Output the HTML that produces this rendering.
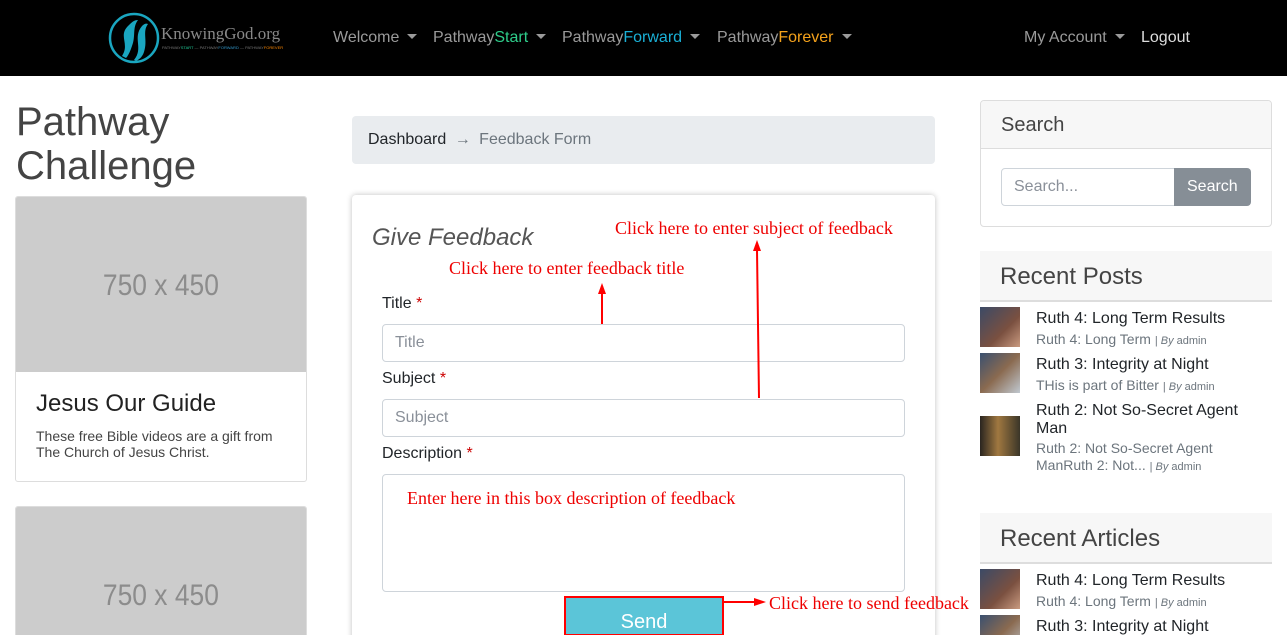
<!DOCTYPE html>
<html style="overflow:hidden;height:635px"><head><style>
*{box-sizing:border-box;margin:0;padding:0}
body{width:1287px;height:635px;overflow:hidden;background:#fff;font-family:"Liberation Sans",sans-serif;color:#212529;position:relative}
.a{position:absolute;white-space:nowrap}
.nav{position:absolute;left:0;top:0;width:1287px;height:76px;background:#000}
.ni{position:absolute;top:29px;font-size:16px;color:#9a9a9a}
.car::after{content:"";display:inline-block;margin-left:8px;vertical-align:3px;border-top:5px solid #9a9a9a;border-left:5px solid transparent;border-right:5px solid transparent}
.red{color:#e00;font-family:"Liberation Serif",serif;font-size:18px}
.inp{position:absolute;left:382px;width:523px;height:38px;border:1px solid #ced4da;border-radius:4px;color:#8a9099;font-size:16px;padding:9px 12px}
.lbl{position:absolute;left:382px;font-size:16px}
.lbl b{color:#c00;font-weight:normal}
.thumb{position:absolute;left:980px;width:40px;height:40px}
.pt{position:absolute;left:1036px;font-size:16px;color:#212529}
.ps{position:absolute;left:1036px;font-size:14px;color:#6c757d}
.ps small{font-size:11px}
.ph{height:175px;background:#ccc;color:#8c8c8c;font-size:30px;text-align:center;line-height:178px}
.ph span{display:inline-block;transform:scaleX(.88)}
</style></head><body>
<div class="nav">
<svg style="position:absolute;left:108px;top:12px" width="52" height="52" viewBox="0 0 52 52"><circle cx="26" cy="26" r="24" fill="#000" stroke="#1aa6c0" stroke-width="2.5"/><path d="M14 44 C22 32 10 24 20 14 C24 10 26 8 30 8 C24 16 28 24 24 34 C22 40 20 44 18 46Z" fill="#1aa6c0"/><path d="M26 48 C36 36 24 26 34 14 C36 12 38 11 40 12 C34 20 40 28 36 40 C34 46 30 48 28 49Z" fill="#1aa6c0"/></svg>
<div class="a" style="left:161px;top:24px;font-family:'Liberation Serif',serif;font-size:17px;color:#888">KnowingGod.org</div>
<div class="a" style="left:162px;top:45px;font-size:4px;color:#777">PATHWAY<span style="color:#2c9">START</span> — PATHWAY<span style="color:#39c">FORWARD</span> — PATHWAY<span style="color:#f80">FOREVER</span></div>
<div class="ni car" style="left:333px">Welcome</div>
<div class="ni car" style="left:433px">Pathway<span style="color:#2ecc8a">Start</span></div>
<div class="ni car" style="left:562px">Pathway<span style="color:#1ab0d6">Forward</span></div>
<div class="ni car" style="left:717px">Pathway<span style="color:#f5a21b">Forever</span></div>
<div class="ni car" style="left:1024px">My Account</div>
<div class="ni" style="left:1141px;color:#ddd">Logout</div>
</div>

<div class="a" style="left:16px;top:100px;font-size:40px;line-height:44px;color:#444">Pathway<br>Challenge</div>
<div class="a" style="left:15px;top:196px;width:292px;height:286px;border:1px solid #ddd;border-radius:3px;overflow:hidden">
<div class="ph"><span>750 x 450</span></div>
<div style="padding:18px 20px;white-space:normal"><div style="font-size:24px;color:#222">Jesus Our Guide</div><div style="font-size:14px;color:#444;margin-top:10px;line-height:16px">These free Bible videos are a gift from The Church of Jesus Christ.</div></div>
</div>
<div class="a" style="left:15px;top:506px;width:292px;height:140px;border:1px solid #ddd;border-radius:3px;overflow:hidden"><div class="ph"><span>750 x 450</span></div></div>

<div class="a" style="left:352px;top:116px;width:583px;height:48px;background:#e9ecef;border-radius:4px;padding:15px 16px;font-size:16px">Dashboard <span style="color:#6c757d;margin:0 4px">→</span> <span style="color:#6c757d">Feedback Form</span></div>
<div class="a" style="left:352px;top:195px;width:583px;height:460px;border-radius:4px;box-shadow:0 0 6px rgba(0,0,0,.25);background:#fff"></div>
<div class="a" style="left:372px;top:224px;font-size:24px;font-style:italic;color:#555">Give Feedback</div>
<div class="a red" style="left:615px;top:218px">Click here to enter subject of feedback</div>
<div class="a red" style="left:449px;top:258px">Click here to enter feedback title</div>
<div class="lbl" style="top:295px">Title <b>*</b></div>
<div class="inp" style="top:324px">Title</div>
<div class="lbl" style="top:370px">Subject <b>*</b></div>
<div class="inp" style="top:399px">Subject</div>
<div class="lbl" style="top:445px">Description <b>*</b></div>
<div class="inp" style="top:474px;height:118px"></div>
<div class="a red" style="left:407px;top:488px">Enter here in this box description of feedback</div>
<svg class="a" style="left:0;top:0" width="1287" height="635"><g stroke="#f00" stroke-width="2" fill="#f00"><line x1="602" y1="292" x2="602" y2="324"/><polygon points="598,294 606,294 602,283" stroke="none"/><line x1="757" y1="250" x2="759" y2="398"/><polygon points="753,251 761,251 757,240" stroke="none"/><line x1="724" y1="602" x2="756" y2="602"/><polygon points="754,598 754,606 766,602" stroke="none"/></g></svg>
<div class="a" style="left:564px;top:596px;width:160px;height:40px;background:#5bc5d8;border:2px solid #f00;color:#fff;font-size:20px;text-align:center;padding-top:13px">Send</div>
<div class="a red" style="left:769px;top:593px">Click here to send feedback</div>

<div class="a" style="left:980px;top:100px;width:292px;height:127px;border:1px solid #ddd;border-radius:4px;overflow:hidden">
<div style="height:48px;background:#f7f7f7;border-bottom:1px solid #ddd;font-size:20px;padding:13px 20px;color:#444">Search</div></div>
<div class="a" style="left:1001px;top:168px;width:174px;height:38px;border:1px solid #ced4da;border-radius:4px 0 0 4px;padding:9px 12px;color:#8a9099;font-size:16px">Search...</div>
<div class="a" style="left:1174px;top:168px;width:77px;height:38px;background:#868e96;border-radius:0 4px 4px 0;color:#fff;font-size:16px;padding:10px 13px">Search</div>

<div class="a" style="left:980px;top:251px;width:292px;height:51px;background:#f7f7f7;border-bottom:2px solid #ddd;font-size:24px;padding:12px 20px;color:#444">Recent Posts</div>
<div class="thumb" style="top:307px;background:linear-gradient(135deg,#3b4a66,#7a5040 60%,#c99a80)"></div>
<div class="pt" style="top:310px">Ruth 4: Long Term Results</div>
<div class="ps" style="top:331px">Ruth 4: Long Term <small>| <i>By</i> admin</small></div>
<div class="thumb" style="top:353px;background:linear-gradient(135deg,#3a5070,#8a6a50 50%,#c0c8d0)"></div>
<div class="pt" style="top:356px">Ruth 3: Integrity at Night</div>
<div class="ps" style="top:377px">THis is part of Bitter <small>| <i>By</i> admin</small></div>
<div class="thumb" style="top:416px;background:linear-gradient(90deg,#2a2520,#a07840 45%,#3a3528)"></div>
<div class="pt" style="top:402px;line-height:18px">Ruth 2: Not So-Secret Agent<br>Man</div>
<div class="ps" style="top:440px;line-height:17px">Ruth 2: Not So-Secret Agent<br>ManRuth 2: Not... <small>| <i>By</i> admin</small></div>

<div class="a" style="left:980px;top:513px;width:292px;height:51px;background:#f7f7f7;border-bottom:2px solid #ddd;font-size:24px;padding:12px 20px;color:#444">Recent Articles</div>
<div class="thumb" style="top:569px;background:linear-gradient(135deg,#3b4a66,#7a5040 60%,#c99a80)"></div>
<div class="pt" style="top:572px">Ruth 4: Long Term Results</div>
<div class="ps" style="top:593px">Ruth 4: Long Term <small>| <i>By</i> admin</small></div>
<div class="thumb" style="top:615px;background:linear-gradient(135deg,#3a5070,#8a6a50 50%,#c0c8d0)"></div>
<div class="pt" style="top:618px">Ruth 3: Integrity at Night</div>
</body></html>
